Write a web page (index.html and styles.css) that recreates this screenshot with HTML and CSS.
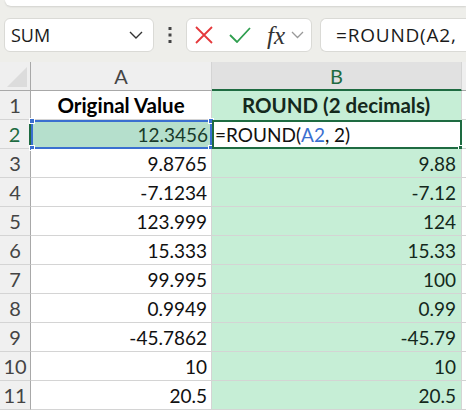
FILE: index.html
```html
<!DOCTYPE html>
<html lang="en">
<head>
    <meta charset="UTF-8">
    <meta name="viewport" content="width=device-width, initial-scale=1.0">
    <title>ROUND sheet</title>
    <link rel="stylesheet" href="styles.css">
</head>
<body>
    <div class="toolbar">
        <div class="ribbon-edge"></div>
        <div class="formula-row">
            <div class="name-box">
                <span>SUM</span>
                <svg class="chevron" width="14" height="8" viewBox="0 0 14 8"><path d="M1 1 L7 7 L13 1" fill="none" stroke="#333" stroke-width="1.4"/></svg>
            </div>
            <div class="dots">
                <svg width="4" height="16" viewBox="0 0 4 16"><rect x="0.5" y="0" width="3" height="3" fill="#444"/><rect x="0.5" y="6.5" width="3" height="3" fill="#444"/><rect x="0.5" y="13" width="3" height="3" fill="#444"/></svg>
            </div>
            <div class="fx-box">
                <svg class="icon-x" width="18" height="18" viewBox="0 0 18 18"><path d="M1 1 L17 17 M17 1 L1 17" stroke="#e5383b" stroke-width="1.8"/></svg>
                <svg class="icon-check" width="22" height="16" viewBox="0 0 22 16"><path d="M1 8 L8 15 L21 1" fill="none" stroke="#2f9e4f" stroke-width="1.8"/></svg>
                <span class="fx">fx</span>
                <svg class="chevron small" width="13" height="8" viewBox="0 0 13 8"><path d="M1 1 L6.5 6.5 L12 1" fill="none" stroke="#999" stroke-width="1.3"/></svg>
            </div>
            <div class="formula-input">=ROUND(A2,</div>
        </div>
    </div>

    <div class="sheet">
        <div class="corner"><span class="tri"></span></div>
        <div class="col-head">A</div>
        <div class="col-head active">B</div>
        <div class="col-head rest"></div>

        <div class="row-head">1</div>
        <div class="cell title">Original Value</div>
        <div class="cell title green">ROUND (2 decimals)</div>
        <div class="cell rest"></div>

        <div class="row-head active">2</div>
        <div class="cell ref">12.3456<i class="h tl"></i><i class="h tr"></i><i class="h bl"></i><i class="h br"></i></div>
        <div class="cell editing">=ROUND(<span class="ref-text">A2</span>, 2)<i class="fill-handle"></i></div>
        <div class="cell rest"></div>

        <div class="row-head">3</div>
        <div class="cell num">9.8765</div>
        <div class="cell num green">9.88</div>
        <div class="cell rest"></div>

        <div class="row-head">4</div>
        <div class="cell num">-7.1234</div>
        <div class="cell num green">-7.12</div>
        <div class="cell rest"></div>

        <div class="row-head">5</div>
        <div class="cell num">123.999</div>
        <div class="cell num green">124</div>
        <div class="cell rest"></div>

        <div class="row-head">6</div>
        <div class="cell num">15.333</div>
        <div class="cell num green">15.33</div>
        <div class="cell rest"></div>

        <div class="row-head">7</div>
        <div class="cell num">99.995</div>
        <div class="cell num green">100</div>
        <div class="cell rest"></div>

        <div class="row-head">8</div>
        <div class="cell num">0.9949</div>
        <div class="cell num green">0.99</div>
        <div class="cell rest"></div>

        <div class="row-head">9</div>
        <div class="cell num">-45.7862</div>
        <div class="cell num green">-45.79</div>
        <div class="cell rest"></div>

        <div class="row-head">10</div>
        <div class="cell num">10</div>
        <div class="cell num green">10</div>
        <div class="cell rest"></div>

        <div class="row-head">11</div>
        <div class="cell num">20.5</div>
        <div class="cell num green">20.5</div>
        <div class="cell rest"></div>
    </div>
</body>
</html>
```

FILE: styles.css
```css
* {
    box-sizing: border-box;
}
body {
    margin: 0;
    width: 466px;
    height: 416px;
    overflow: hidden;
    background-color: #fff;
    font-family: Lato, "Open Sans", sans-serif;
}
.toolbar {
    height: 62px;
    background-color: #eeeeea;
    overflow: hidden;
}
.ribbon-edge {
    height: 6px;
    margin-left: 5px;
    background-color: #fff;
    border-radius: 0 0 0 7px;
    box-shadow: 0 1px 2px rgba(0, 0, 0, 0.12);
}
.formula-row {
    display: flex;
    align-items: center;
    height: 34px;
    margin-top: 12px;
    font-family: "Open Sans", sans-serif;
    font-size: 18px;
    color: #1a1a1a;
}
.name-box {
    display: flex;
    align-items: center;
    justify-content: space-between;
    width: 150px;
    height: 34px;
    margin-left: 4px;
    padding: 0 10px 0 6px;
    background-color: #fff;
    border: 1px solid #dadad6;
    border-radius: 6px;
}
.dots {
    display: flex;
    align-items: center;
    width: 32px;
    padding-left: 14px;
}
.fx-box {
    display: flex;
    align-items: center;
    width: 126px;
    height: 34px;
    padding-left: 8px;
    background-color: #fff;
    border: 1px solid #dadad6;
    border-radius: 6px;
}
.icon-check {
    margin-left: 16px;
}
.fx {
    margin-left: 16px;
    font-family: "Liberation Serif", serif;
    font-style: italic;
    font-size: 25px;
    color: #333;
    line-height: 1;
}
.chevron.small {
    margin-left: 6px;
}
.formula-input {
    flex: 1;
    height: 34px;
    margin-left: 8px;
    padding-left: 15px;
    line-height: 32px;
    font-size: 19px;
    background-color: #fff;
    border: 1px solid #dadad6;
    border-right: none;
    border-radius: 6px 0 0 6px;
    white-space: nowrap;
    letter-spacing: 0.8px;
}

.sheet {
    display: grid;
    grid-template-columns: 31px 181px 250px 1fr;
    grid-auto-rows: 29px;
    font-size: 19px;
    color: #111;
}
.corner {
    position: relative;
    background-color: #efefef;
    border-right: 1px solid #a8a8a8;
    border-bottom: 1px solid #a8a8a8;
}
.corner .tri {
    position: absolute;
    right: 3px;
    bottom: 3px;
    width: 0;
    height: 0;
    border-left: 20px solid transparent;
    border-bottom: 20px solid #dcdcdc;
}
.col-head {
    display: flex;
    align-items: center;
    justify-content: center;
    background-color: #efefef;
    color: #444;
    font-size: 20px;
    border-right: 1px solid #d4d4d4;
    border-bottom: 1px solid #a8a8a8;
}
.col-head.active {
    background-color: #e1e1e1;
    color: #1e6b41;
    border-bottom: 2px solid #1e6b41;
}
.col-head.rest {
    border-right: none;
}
.row-head {
    display: flex;
    align-items: center;
    justify-content: center;
    background-color: #f0f0f0;
    color: #444;
    font-size: 20px;
    border-right: 1px solid #a8a8a8;
    border-bottom: 1px solid #d4d4d4;
}
.row-head.active {
    color: #1e6b41;
    border-right: 2px solid #1e6b41;
}
.cell {
    position: relative;
    display: flex;
    align-items: center;
    padding: 0 4px;
    background-color: #fff;
    border-right: 1px solid #d4d4d4;
    border-bottom: 1px solid #d4d4d4;
    white-space: nowrap;
}
.cell.num {
    justify-content: flex-end;
}
.cell.title {
    justify-content: center;
    font-weight: bold;
    font-size: 20.5px;
    color: #000;
}
.cell.green {
    background-color: #c6eed6;
    color: #14281c;
    padding-right: 5px;
}
.cell.title.green {
    border-bottom-color: #c6eed6;
}
.cell.rest {
    border-right: none;
}
.cell.ref {
    justify-content: flex-end;
    background-color: #b5dfcc;
    color: #173a2a;
    border: 2px solid #3a6fd0;
    padding-right: 2px;
}
.h {
    position: absolute;
    width: 6px;
    height: 6px;
    background-color: #3a6fd0;
    border: 1px solid #fff;
}
.h.tl { left: -4px; top: -4px; }
.h.tr { right: -4px; top: -4px; }
.h.bl { left: -4px; bottom: -4px; }
.h.br { right: -4px; bottom: -4px; }
.cell.editing {
    padding-left: 1px;
    color: #111;
    border: 2px solid #1e6b41;
}
.ref-text {
    color: #3a6fd0;
}
.fill-handle {
    position: absolute;
    right: -4px;
    bottom: -4px;
    width: 6px;
    height: 6px;
    background-color: #1e6b41;
    border: 1px solid #fff;
}
```
